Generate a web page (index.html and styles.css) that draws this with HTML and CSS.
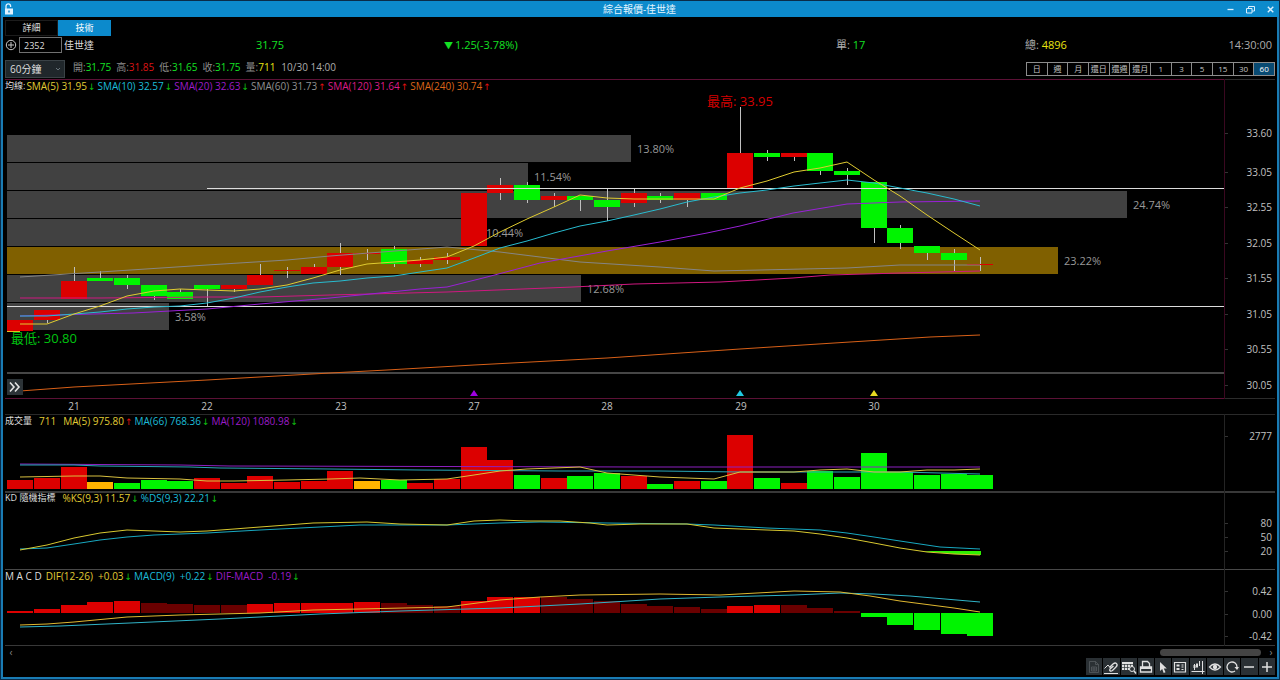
FILE: index.html
```html
<!DOCTYPE html>
<html lang="zh-Hant">
<head>
<meta charset="utf-8">
<title>綜合報價-佳世達</title>
<link rel="stylesheet" href="styles.css">
</head>
<body>
<div class="window">
  <header class="titlebar">
    <svg class="lock" viewBox="0 0 10 12" width="10" height="12" aria-hidden="true"><path d="M2 6V3.2a2.3 2.3 0 0 1 4.6 0V4" fill="none" stroke="#dff2ff" stroke-width="1.3"/><rect x="1" y="5.5" width="8" height="6" fill="#dff2ff"/><rect x="4.3" y="7.5" width="1.4" height="2" fill="#0b8ccf"/></svg>
    <h1 class="title">綜合報價-佳世達</h1>
    <div class="win-buttons">
      <button type="button" aria-label="最小化"><svg viewBox="0 0 9 9"><path d="M1.5 4.5h6" stroke-width="1.3"/></svg></button>
      <button type="button" aria-label="還原"><svg viewBox="0 0 9 9"><path d="M.5 3.5h5.5v4.500H.5zM2.500 3.500v-2h6v4.500H6"/></svg></button>
      <button type="button" aria-label="關閉"><svg viewBox="0 0 9 9"><path d="M1.800 1.800l5.500 5.500M7.300 1.800L1.800 7.300" stroke-width="1.400"/></svg></button>
    </div>
  </header>

  <main class="client">
    <nav class="tabs">
      <button type="button" class="tab">詳細</button>
      <button type="button" class="tab tab-active">技術</button>
    </nav>

    <div class="quote">
      <div class="symbol">
        <button type="button" class="add" aria-label="新增"><svg viewBox="0 0 12 12" width="12" height="12"><circle cx="6" cy="6" r="4.700"/><path d="M3 6h6M6 3v6"/></svg></button>
        <input class="code" type="text" value="2352" aria-label="股票代號">
        <span class="name">佳世達</span>
      </div>
      <span class="up-green">31.75</span>
      <span class="up-green"><b class="mark">▼</b>1.25(-3.78%)</span>
      <span>單: <b class="up-green">17</b></span>
      <span>總: <b class="yellow">4896</b></span>
      <span class="clock">14:30:00</span>
    </div>

    <div class="controls">
      <div class="interval">
        <select aria-label="週期"><option>60分鐘</option></select>
        <svg class="caret" viewBox="0 0 6 4" width="6" height="4" aria-hidden="true"><path d="M1 1l2 2 2-2" fill="none" stroke="#68747a"/></svg>
      </div>
      <div class="ohlc">
        <span>開:<b class="up-green">31.75</b></span>
        <span>高:<b class="red">31.85</b></span>
        <span>低:<b class="up-green">31.65</b></span>
        <span>收:<b class="up-green">31.75</b></span>
        <span>量:<b class="yellow">711</b></span>
        <span class="stamp">10/30 14:00</span>
      </div>
      <div class="periods">
        <button type="button">日</button><button type="button">週</button><button type="button">月</button><button type="button">還日</button><button type="button">還週</button><button type="button">還月</button><button type="button">1</button><button type="button">3</button><button type="button">5</button><button type="button">15</button><button type="button">30</button><button type="button" class="period-active">60</button>
      </div>
    </div>

    <section class="panel">
      <svg class="chart" viewBox="5 79 1270 335">
        <g class="crisp">
          <rect x="5" y="79" width="1220" height="1" fill="#5c1136"/>
          <rect x="1225" y="79" width="50" height="1" fill="#2c2c2c"/>
          <rect x="5" y="398" width="1220" height="1" fill="#5c1136"/>
          <rect x="1225" y="398" width="50" height="1" fill="#2c2c2c"/>
          <rect x="1224" y="79" width="1" height="320" fill="#3a0820"/>
          <g id="profile"></g>
          <rect x="7" y="372" width="1217" height="2" fill="#464646"/>
        </g>
        <g id="profile-labels" class="pct"></g>
        <g id="candles" class="crisp"></g>
        <g class="crisp">
          <rect x="207" y="188" width="1017" height="1" fill="#dcdcdc"/>
          <rect x="7" y="306" width="1217" height="1" fill="#dcdcdc"/>
        </g>
        <g id="averages" class="line"></g>
        <rect x="7" y="331" width="13" height="1" fill="#e0c020"/>
        <text class="extreme" x="707" y="106" fill="#d40000">最高: 33.95</text>
        <text class="extreme" x="11" y="343" fill="#00c410">最低: 30.80</text>
        <rect x="7" y="379" width="16" height="16" fill="#2c3337"/>
        <path d="M10 382.500l4 4.500-4 4.500M15 382.500l4 4.500-4 4.500" fill="none" stroke="#e4e4e4" stroke-width="1.600"/>
        <path d="M474 390l4 6h-8z" fill="#a000e0"/>
        <path d="M740 390l4 6h-8z" fill="#20c8e0"/>
        <path d="M874 390l4 6h-8z" fill="#e8d820"/>
        <g class="axis" id="axis-price"></g>
        <g class="dates">
          <text x="74" y="410">21</text><text x="207" y="410">22</text><text x="341" y="410">23</text><text x="474" y="410">27</text><text x="607" y="410">28</text><text x="741" y="410">29</text><text x="874" y="410">30</text>
        </g>
      </svg>
      <p class="legend"><span class="cjk">均線:</span><span class="c5">SMA(5) 31.95<i class="dn">↓</i></span><span class="c10">SMA(10) 32.57<i class="dn">↓</i></span><span class="c20">SMA(20) 32.63<i class="dn">↓</i></span><span class="c60">SMA(60) 31.73<i class="up">↑</i></span><span class="c120">SMA(120) 31.64<i class="up">↑</i></span><span class="c240">SMA(240) 30.74<i class="up">↑</i></span></p>
    </section>

    <section class="panel">
      <svg class="chart" viewBox="5 414 1270 77">
        <g class="crisp"><rect x="5" y="414" width="1270" height="1" fill="#2a2a2a"/><rect x="1224" y="414" width="1" height="77" fill="#242424"/></g>
        <g id="volume" class="crisp"></g>
        <g id="volume-lines" class="line"></g>
        <g class="axis" id="axis-volume"></g>
      </svg>
      <p class="legend"><span class="cjk gap-after">成交量</span><span class="c5 gap-after">711</span><span class="c5">MA(5) 975.80<i class="up">↑</i></span><span class="c10">MA(66) 768.36<i class="dn">↓</i></span><span class="c20">MA(120) 1080.98<i class="dn">↓</i></span></p>
    </section>

    <section class="panel">
      <svg class="chart" viewBox="5 491 1270 78">
        <g class="crisp"><rect x="5" y="491" width="1270" height="2" fill="#383838"/><rect x="1224" y="491" width="1" height="78" fill="#242424"/></g>
        <path d="M920 551h61v4l-27-1z" fill="#30f000"/>
        <g id="kd-lines" class="line"></g>
        <g class="axis" id="axis-kd"></g>
      </svg>
      <p class="legend"><span class="cjk gap-after">KD 隨機指標</span><span class="c5">%KS(9,3) 11.57<i class="dn">↓</i></span><span class="c10">%DS(9,3) 22.21<i class="dn">↓</i></span></p>
    </section>

    <section class="panel">
      <svg class="chart" viewBox="5 569 1270 77">
        <g class="crisp"><rect x="5" y="569" width="1270" height="1" fill="#484848"/><rect x="5" y="645" width="1270" height="1" fill="#383838"/><rect x="1224" y="569" width="1" height="77" fill="#242424"/></g>
        <g id="macd" class="crisp"></g>
        <g id="macd-lines" class="line"></g>
        <g class="axis" id="axis-macd"></g>
      </svg>
      <p class="legend"><span class="wide">M A C D</span><span class="c5">DIF(12-26) &nbsp;+0.03<i class="dn">↓</i></span><span class="c10">MACD(9) &nbsp;+0.22<i class="dn">↓</i></span><span class="c20">DIF-MACD &nbsp;-0.19<i class="dn">↓</i></span></p>
    </section>

    <div class="scroll">
      <button type="button" aria-label="向左捲動">‹</button>
      <span class="thumb"></span>
      <button type="button" aria-label="向右捲動">›</button>
    </div>

    <div class="toolbar">
      <button type="button" class="off" aria-label="匯出" disabled><svg viewBox="0 0 16 16"><path d="M3.500 2.500h6l3 3v8h-9zM9.500 2.500v3h3M5.500 8h5v4h-5zM8 8v4M5.500 10h5" stroke-width=".8"/></svg></button>
      <button type="button" aria-label="畫線"><svg viewBox="0 0 16 16"><path d="M1.500 9.500L5 6l2 2.500M1 14.500h14"/><path d="M6.500 8.500L10 5c3-2.500 5.500.500 3 3l-3.500 3.500c-2 1.500-3.500 0-2.500-1.500l3.500-3" stroke-width="1.300"/></svg></button>
      <button type="button" aria-label="查詢表格"><svg viewBox="0 0 16 16"><path class="solid" d="M1 3h11v8H1z"/><path d="M1 5.500h11M1 8.500h11M3.500 5v6M6.500 5v6M9.500 5v6" stroke="#2a3034" stroke-width=".7"/><circle cx="11" cy="10" r="2.500" fill="#2a3034"/><path d="M13 12l2 2.500" stroke-width="1.500"/></svg></button>
      <button type="button" aria-label="列印"><svg viewBox="0 0 16 16"><path d="M4.500 7.500v-5h5l2 2v3M2.500 8h11v5h-11z" stroke-width="1.300"/><path class="solid" d="M2 8h12v2H2z"/></svg></button>
      <button type="button" aria-label="游標"><svg viewBox="0 0 16 16"><path class="solid" d="M5 3v9l2.200-2 1.500 4 1.800-.800L8.800 9.500h3z"/></svg></button>
      <button type="button" aria-label="資訊窗"><svg viewBox="0 0 16 16"><path d="M2.500 3.500h11v9.500h-11z" stroke-width="1.200"/><path class="solid" d="M4.500 5.500h3v2h-3zM4.500 9h3v2h-3zM9.500 5.500h2v1h-2zM9.500 7.500h2v1h-2zM9.500 10h2v1h-2z"/></svg></button>
      <button type="button" aria-label="十字線"><svg viewBox="0 0 16 16"><path d="M1.500 12.500h13M12.500 2v13M4.500 5v6M7 4v5M9.500 2v5"/><path d="M4.500 6v3M7 5v3" stroke-width="2"/></svg></button>
      <button type="button" aria-label="顯示"><svg viewBox="0 0 16 16"><path d="M2.500 8q5.500-6 11 0-5.500 6-11 0z" stroke-width="1.300"/><circle class="solid" cx="8" cy="8" r="2.200"/></svg></button>
      <button type="button" aria-label="重新整理"><svg viewBox="0 0 16 16"><path d="M11 12a5 5 0 1 1 2-4" stroke-width="1.300"/><path class="solid" d="M10.500 8h4.500l-2 3z"/></svg></button>
      <button type="button" aria-label="縮小"><svg viewBox="0 0 16 16"><path d="M3 8h10" stroke-width="1.500"/></svg></button>
      <button type="button" aria-label="放大"><svg viewBox="0 0 16 16"><path d="M3 8h10M8 3v10" stroke-width="1.500"/></svg></button>
    </div>
  </main>
</div>
<script src="script.js"></script>
</body>
</html>
```
FILE: styles.css
```css
* { box-sizing: border-box; }

body {
  margin: 0;
  background: #000;
  color: #acacac;
  font-family: "Open Sans", "Noto Sans CJK TC", sans-serif;
  font-size: 10px;
  line-height: 12px;
}

button {
  margin: 0;
  padding: 0;
  border: 0;
  background: none;
  color: inherit;
  font: inherit;
}

b, i { font-weight: normal; font-style: normal; }

.window {
  display: flex;
  flex-direction: column;
  min-height: 100vh;
  border: 1px solid #0a2c48;
}

.titlebar {
  display: grid;
  grid-template-columns: 1fr auto 1fr;
  align-items: center;
  height: 16px;
  padding: 0 4px 0 3px;
  background: #0c8acc;
  color: #e6f6ff;
}

.title { margin: 0; font-size: 10px; font-weight: normal; line-height: 14px; }

.win-buttons { display: flex; justify-content: flex-end; gap: 11px; }
.win-buttons button { width: 9px; height: 9px; }
.win-buttons svg { display: block; fill: none; stroke: #d8efff; }

.client {
  flex: 1;
  padding: 3px 2px 0;
  border: solid #1a7cb4;
  border-width: 0 2px 2px;
}

.tabs { display: flex; }
.tab {
  width: 53px;
  height: 16px;
  border: 1px solid #1c1c1c;
  color: #e0e0e0;
  font-size: 9px;
  line-height: 12px;
}
.tab-active { border-color: #0c8acc; background: #0c8acc; color: #fff; }

.quote {
  display: grid;
  grid-template-columns: 251fr 188fr 392fr 189fr 125fr 125fr;
  align-items: center;
  height: 18px;
  margin-bottom: 7px;
  font-size: 11px;
}
.symbol { display: flex; align-items: center; gap: 2px; }
.add { width: 12px; height: 12px; }
.add svg { display: block; fill: none; stroke: #c8c8c8; }
.code {
  width: 43px;
  height: 16px;
  padding: 0 4px;
  border: 1px solid #707070;
  background: #000;
  color: #ddd;
  font: 9px "Open Sans", sans-serif;
}
.name { color: #ddd; font-size: 10px; }
.mark { margin-right: 2px; font-size: 9px; }
.clock { padding-right: 3px; text-align: right; }

.up-green { color: #14e024; }
.red { color: #dc1414; }
.yellow { color: #e8e410; }

.controls {
  display: flex;
  align-items: center;
  height: 18px;
  padding-bottom: 2px;
}
.interval { display: grid; width: 60px; align-items: center; }
.interval > * { grid-area: 1 / 1; }
.interval select {
  width: 100%;
  height: 18px;
  padding: 0 4px;
  border: 1px solid #3a4246;
  border-radius: 0;
  background: #20272b;
  color: #ddd;
  font: 10px "Open Sans", "Noto Sans CJK TC", sans-serif;
  appearance: none;
}
.caret { justify-self: end; margin-right: 4px; pointer-events: none; }
.ohlc { display: flex; flex: 1; gap: 5px; padding: 0 0 4px 8px; color: #8c8c8c; }
.ohlc span { white-space: nowrap; }
.ohlc .stamp { margin-left: 1px; color: #acacac; }
.periods {
  display: grid;
  grid-template-columns: repeat(12, 1fr);
  width: 249px;
  border: solid #8c8c8c;
  border-width: 1px 0 1px 1px;
}
.periods button {
  height: 12px;
  border-right: 1px solid #8c8c8c;
  color: #c4c4c4;
  font-size: 8px;
  line-height: 10px;
}
.periods .period-active { background: #084a72; color: #fff; }

.panel { display: grid; }
.panel > * { grid-area: 1 / 1; }
.chart { display: block; width: 100%; height: auto; font-size: 10px; }
.crisp { shape-rendering: crispEdges; }
.line { fill: none; }
.pct { fill: #989898; font-size: 11px; }
.extreme { font-size: 13px; }
.axis text { fill: #c0c0c0; text-anchor: end; }
.dates { fill: #c0c0c0; text-anchor: middle; }

.legend {
  display: flex;
  align-self: start;
  margin: 0;
  padding-top: 1px;
  white-space: nowrap;
}
.legend span { margin-right: 2px; }
.legend i { margin-left: 1px; font: 9px/12px "DejaVu Sans", sans-serif; }
.legend .cjk { margin-right: 1px; color: #ddd; font-size: 9px; }
.legend .gap-after { margin-right: 7px; }
.legend .wide { margin-right: 4px; color: #ddd; }
.c5 { color: #e0cc34; }
.c10 { color: #1cbcd8; }
.c20 { color: #9c1cc8; }
.c60 { color: #909090; }
.c120 { color: #dc1c88; }
.c240 { color: #dc6418; }
.dn { color: #10c010; }
.up { color: #e01010; }

.scroll { display: flex; align-items: center; height: 12px; padding: 0 1px 0 3px; }
.scroll button { width: 6px; color: #888; line-height: 10px; }
.thumb {
  width: 8%;
  height: 7px;
  margin: 0 7px 0 auto;
  border-radius: 4px;
  background: #444;
}

.toolbar {
  display: grid;
  grid-template-columns: repeat(11, 1fr);
  gap: 1px;
  width: 189px;
  margin-left: auto;
}
.toolbar button { height: 17px; background: #2a3034; }
.toolbar svg { display: block; width: 16px; height: 16px; fill: none; stroke: #e0e0e0; }
.toolbar .solid { fill: #e0e0e0; stroke: none; }
.toolbar .off svg { stroke: #555c60; }
```
FILE: script.js
```js
const NS = 'http://www.w3.org/2000/svg';
const RED = '#dc0000', GREEN = '#00f400', AMBER = '#ffb400', DARK = '#6a0000';
const COLORS = { r: RED, g: GREEN, a: AMBER, d: DARK };
const center = i => Math.round(20.3 + i * 26.67);

function add(id, tag, attrs, text) {
  const el = document.createElementNS(NS, tag);
  for (const key in attrs) el.setAttribute(key, attrs[key]);
  if (text) el.textContent = text;
  document.getElementById(id).appendChild(el);
}

function lines(id, list) {
  for (const [stroke, points] of list) add(id, 'polyline', { points, stroke });
}

function axis(id, list) {
  for (const [y, label] of list) {
    add(id, 'rect', { x: 1225, y, width: 3, height: 1, fill: '#333' });
    add(id, 'text', { x: 1272, y: y + 4 }, label);
  }
}

// Volume profile: top, right edge, share
[[135, 631, '13.80%'], [163, 528, '11.54%'], [191, 1127, '24.74%'], [219, 479, '10.44%'],
 [247, 1058, '23.22%'], [275, 581, '12.68%'], [303, 169, '3.58%']].forEach(([y, x, label]) => {
  add('profile', 'rect', { x: 7, y, width: x - 7, height: 27, fill: y === 247 ? '#806000' : '#414141' });
  add('profile-labels', 'text', { x: x + (y === 219 ? 7 : 6), y: y + 18 }, label);
});

// Candles: colour, body top, body bottom, wick top, wick bottom
[['r',320,331,320,331],['r',310,320,310,323],['r',281,299,267,299],['g',278,281,271,281],
 ['g',278,285,275,289],['g',285,296,285,300],['g',292,299,289,299],['g',285,289,285,306],
 ['r',285,289,285,292],['r',275,285,264,285],['r',270,271,267,278],['r',267,274,264,274],
 ['r',253,267,243,275],['r',253,254,249,260],['g',249,264,246,267],['r',260,264,257,267],
 ['r',257,260,253,264],['r',193,246,193,246],['r',185,193,178,200],['g',185,200,182,203],
 ['r',196,200,193,207],['g',196,200,196,211],['g',200,207,189,221],['r',193,203,189,207],
 ['g',196,200,193,203],['r',193,200,193,207],['g',193,200,193,200],['r',153,189,107,189],
 ['g',153,157,150,161],['r',153,157,153,161],['g',153,171,153,175],['g',171,175,168,185],
 ['g',182,228,182,243],['g',228,243,225,249],['g',246,253,246,260],['g',253,260,249,271],
 ['r',264,265,257,271]].forEach(([c, top, bottom, high, low], i) => {
  const x = center(i);
  add('candles', 'rect', { x, y: high, width: 1, height: low - high, fill: '#c0c0c0' });
  add('candles', 'rect', { x: x - 13, y: top, width: 26, height: bottom - top, fill: COLORS[c] });
});

lines('averages', [
  ['#858585', '20,277 100,272 207,265 287,260 330,256 447,247 500,252 580,262 660,267 714,271 760,270 847,268 900,265 980,265'],
  ['#d01880', '20,298 100,298 207,297 260,297 330,295 447,292 573,287 634,284 720,282 793,278 830,275 900,273 980,271'],
  ['#d86018', '20,391 74,387 207,380 330,373 387,370 474,365 607,358 740,349 850,342 930,337 980,335'],
  ['#9a20d8', '20,316 93,314 133,313 207,309 260,304 330,298 420,289 447,287 487,277 540,263 607,251 660,242 707,233 740,226 793,213 847,204 900,202 980,201'],
  ['#28bcd0', '20,316 47,316 74,314 100,312 127,309 154,307 180,306 207,303 234,298 260,292 287,287 313,283 340,281 367,278 394,276 420,272 447,268 474,258 500,248 527,241 554,233 580,226 607,221 634,215 660,209 687,202 714,197 740,193 767,190 794,186 820,183 847,180 874,183 900,188 927,193 954,199 980,206'],
  ['#e0cc30', '20,324 47,324 74,314 100,306 127,296 154,291 180,289 207,290 234,291 260,289 287,285 313,278 340,270 367,264 394,262 420,260 447,257 474,246 500,232 527,219 554,207 580,195 607,198 634,199 714,199 740,188 767,181 794,172 820,168 847,162 874,180 900,196 927,215 954,233 980,250']
]);

// Volume: colour and bar top
['r480','r478','r467','a482','g483','g480','g481','r478','r483','r476','r482','r481','r471',
 'a481','g480','r483','r479','r447','r460','g475','r478','g476','g473','r476','g484','r481',
 'g481','r435','g478','r483','g471','g477','g453','g472','g475','g474','g475'].forEach((bar, i) => {
  const y = +bar.slice(1);
  add('volume', 'rect', { x: center(i) - 13, y, width: 26, height: 489 - y, fill: COLORS[bar[0]] });
});
lines('volume-lines', [
  ['#8c20c0', '20,464 180,465 230,466 640,467 850,467 980,467'],
  ['#28a8b8', '20,465 74,465 100,466 190,467 220,468 330,469 420,470 560,471 660,471 740,472 900,472 980,474'],
  ['#d8c040', '20,477 74,476 100,476 127,478 180,479 207,481 234,481 287,480 330,479 360,478 400,480 447,479 474,475 500,471 527,469 580,467 607,473 660,477 714,479 740,472 794,472 820,470 847,469 874,472 900,472 927,470 954,470 980,469']
]);

lines('kd-lines', [
  ['#18a8c0', '20,549 47,548 74,544 100,540 127,537 154,535 207,533 260,530 320,527 360,525 447,525 500,523 540,522 607,523 687,524 714,525 767,528 820,530 847,533 874,537 900,541 940,547 980,549'],
  ['#d8c830', '20,550 47,545 74,538 100,533 127,530 154,531 180,532 207,531 234,529 260,527 287,525 313,523 367,522 400,524 447,525 474,521 500,520 527,521 560,521 590,523 607,525 640,524 687,524 714,528 767,530 794,531 820,534 847,538 874,543 900,548 927,552 954,554 980,555']
]);

// MACD histogram: colour and bar end, measured from the zero line at 613
['r611','r609','r605','r602','r601','d603','d604','d605','d605','r604','r603','r603','r603',
 'r602','d603','d605','d606','r601','r597','r597','d597','d599','d601','d604','d606','d607',
 'd609','r606','r605','d605','d608','d611','g617','g625','g630','g634','g636'].forEach((bar, i) => {
  const y = +bar.slice(1);
  add('macd', 'rect', { x: center(i) - 13, y: Math.min(y, 613), width: 26, height: Math.abs(613 - y), fill: COLORS[bar[0]] });
});
lines('macd-lines', [
  ['#30b4c8', '20,627 60,626 130,623 220,619 320,614 400,611 500,608 580,604 660,599 720,597 794,595 840,593 874,594 910,596 980,602'],
  ['#e0b830', '20,625 47,624 74,622 127,617 180,615 260,613 313,610 360,609 447,607 500,600 540,597 580,595 660,594 720,595 794,591 840,592 870,596 900,601 954,608 980,612']
]);

axis('axis-price', [[133,'33.60'],[172,'33.05'],[207,'32.55'],[243,'32.05'],[278,'31.55'],[314,'31.05'],[349,'30.55'],[385,'30.05']]);
axis('axis-volume', [[436,'2777']]);
axis('axis-kd', [[523,'80'],[537,'50'],[551,'20']]);
axis('axis-macd', [[591,'0.42'],[614,'0.00'],[636,'-0.42']]);
```
